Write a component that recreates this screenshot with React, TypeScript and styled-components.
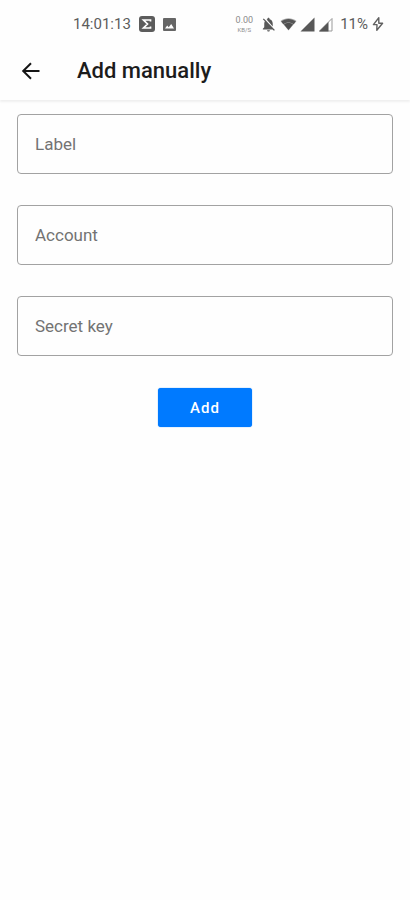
import React from "react";
import styled, { createGlobalStyle } from "styled-components";

const GlobalStyle = createGlobalStyle`
  * { box-sizing: border-box; }
  body {
    margin: 0;
    background: #fefefe;
    color: #1c1c1c;
    font-family: Roboto, "Liberation Sans", sans-serif;
  }
`;

const Screen = styled.div`
  min-height: 100vh;
  display: flex;
  flex-direction: column;
`;

const StatusBar = styled.div`
  display: flex;
  align-items: center;
  justify-content: space-between;
  height: 42px;
  padding: 6px 26px 0 73px;
  color: #5c5c5c;
`;

const StatusGroup = styled.div<{ $gap: number }>`
  display: flex;
  align-items: center;
  gap: ${(p) => p.$gap}px;
`;

const StatusText = styled.span`
  font-size: 15px;
  line-height: 18px;
`;

const Clock = styled(StatusText)`
  min-width: 58px;
`;

const Percent = styled(StatusText)`
  margin: 0 1px 0 4px;
`;

const NetSpeed = styled.span`
  display: flex;
  flex-direction: column;
  align-items: center;
  margin-right: 4px;
  color: #8c8c8c;
  font-size: 9px;
  line-height: 11px;
`;

const NetUnit = styled.span`
  font-size: 6px;
  line-height: 7px;
`;

const AppBar = styled.header`
  display: flex;
  align-items: center;
  gap: 35px;
  height: 58px;
  padding: 0 18px;
  box-shadow: 0 2px 2px rgba(0, 0, 0, 0.06);
`;

const BackButton = styled.button`
  display: flex;
  padding: 0;
  border: 0;
  background: none;
  color: #151515;
  cursor: pointer;
`;

const Title = styled.h1`
  margin: 0;
  font-size: 22px;
  line-height: 28px;
  font-weight: 500;
`;

const Form = styled.form`
  display: flex;
  flex-direction: column;
  gap: 31px;
  padding: 14px 17px;
`;

const TextField = styled.input`
  width: 100%;
  height: 60px;
  padding: 0 17px;
  border: 1px solid #a2a2a2;
  border-radius: 4px;
  background: transparent;
  color: #222;
  font-family: inherit;
  font-size: 17px;
  &::placeholder {
    color: #737373;
    opacity: 1;
  }
  &:focus {
    outline: 1px solid #007aff;
    border-color: #007aff;
  }
`;

const AddButton = styled.button`
  align-self: center;
  width: 94px;
  height: 39px;
  margin-top: 1px;
  padding: 0;
  border: 0;
  border-radius: 3px;
  background: #007aff;
  box-shadow: 0 0 1px #007aff;
  color: #fff;
  font-family: inherit;
  font-size: 15px;
  font-weight: 500;
  letter-spacing: 1px;
  cursor: pointer;
`;

const SigmaIcon = () => (
  <svg width="16" height="16" viewBox="0 0 16 16" aria-hidden="true">
    <rect width="16" height="16" rx="3" fill="#5c5c5c" />
    <path d="M11.5 5.5V4H4.5L8.5 8L4.5 12H11.5V10.5" fill="none" stroke="#fff" strokeWidth="1.7" />
  </svg>
);

const PictureIcon = () => (
  <svg width="13" height="13" viewBox="0 0 13 13" aria-hidden="true">
    <rect width="13" height="13" rx="1" fill="#666" />
    <path d="M2 10.5L4.2 7.5L5.7 9.2L8.2 6L11 10.5Z" fill="#fff" />
  </svg>
);

const BellOffIcon = () => (
  <svg width="17" height="17" viewBox="0 0 24 24" aria-hidden="true">
    <path
      fill="#585858"
      d="M20 18.69L7.84 6.14 5.27 3.49 4 4.76l2.8 2.8v.01c-.52.99-.8 2.16-.8 3.42v5l-2 2v1h13.73l2 2L21 19.72l-1-1.03zM12 22c1.11 0 2-.89 2-2h-4c0 1.11.89 2 2 2zm6-7.32V11c0-3.08-1.64-5.64-4.5-6.32V4c0-.83-.67-1.5-1.5-1.5s-1.5.67-1.5 1.5v.68c-.4.09-.78.23-1.13.4L18 14.68z"
    />
  </svg>
);

const WifiIcon = () => (
  <svg width="17" height="14" viewBox="0 0 17 14" aria-hidden="true">
    <path d="M0.5 4C5 0.2 12 0.2 16.5 4L8.5 13.5Z" fill="#aaa" />
    <path d="M1.2 4.6C5.5 1.2 11.5 1.2 15.8 4.6L13.6 7.2C10.7 4.9 6.3 4.9 3.4 7.2Z" fill="#555" />
    <path d="M4 7.4C6.6 5.5 10.4 5.5 13 7.4L8.5 13Z" fill="#505050" />
  </svg>
);

const SignalIcon = ({ partial = false }: { partial?: boolean }) => (
  <svg width="15" height="15" viewBox="0 0 15 15" aria-hidden="true">
    {partial ? (
      <>
        <path d="M1.5 14L14 1.5V14Z" fill="#fff" stroke="#999" />
        <path d="M1 14.5L10.5 5V14.5Z" fill="#555" />
      </>
    ) : (
      <path d="M0.5 14.5L14.5 0.5V14.5Z" fill="#585858" />
    )}
  </svg>
);

const BoltIcon = () => (
  <svg width="12" height="16" viewBox="0 0 12 16" aria-hidden="true">
    <path
      d="M6.8 1.8L1.4 8.6H5L4.8 14.2L10.6 7.2H6.8Z"
      fill="none"
      stroke="#606060"
      strokeWidth="1.4"
      strokeLinejoin="round"
    />
  </svg>
);

const BackIcon = () => (
  <svg width="24" height="24" viewBox="0 0 24 24" aria-hidden="true">
    <path d="M21.5 12H5.5M13 4.2L5.2 12L13 19.8" fill="none" stroke="currentColor" strokeWidth="2" />
  </svg>
);

const fields = ["Label", "Account", "Secret key"];

export default function App() {
  return (
    <Screen>
      <GlobalStyle />
      <StatusBar>
        <StatusGroup $gap={8}>
          <Clock>14:01:13</Clock>
          <SigmaIcon />
          <PictureIcon />
        </StatusGroup>
        <StatusGroup $gap={3}>
          <NetSpeed>
            <span>0.00</span>
            <NetUnit>KB/S</NetUnit>
          </NetSpeed>
          <BellOffIcon />
          <WifiIcon />
          <SignalIcon />
          <SignalIcon partial />
          <Percent>11%</Percent>
          <BoltIcon />
        </StatusGroup>
      </StatusBar>
      <AppBar>
        <BackButton type="button" aria-label="Back">
          <BackIcon />
        </BackButton>
        <Title>Add manually</Title>
      </AppBar>
      <Form onSubmit={(e: React.FormEvent) => e.preventDefault()}>
        {fields.map((name) => (
          <TextField key={name} type="text" aria-label={name} placeholder={name} />
        ))}
        <AddButton type="submit">Add</AddButton>
      </Form>
    </Screen>
  );
}
